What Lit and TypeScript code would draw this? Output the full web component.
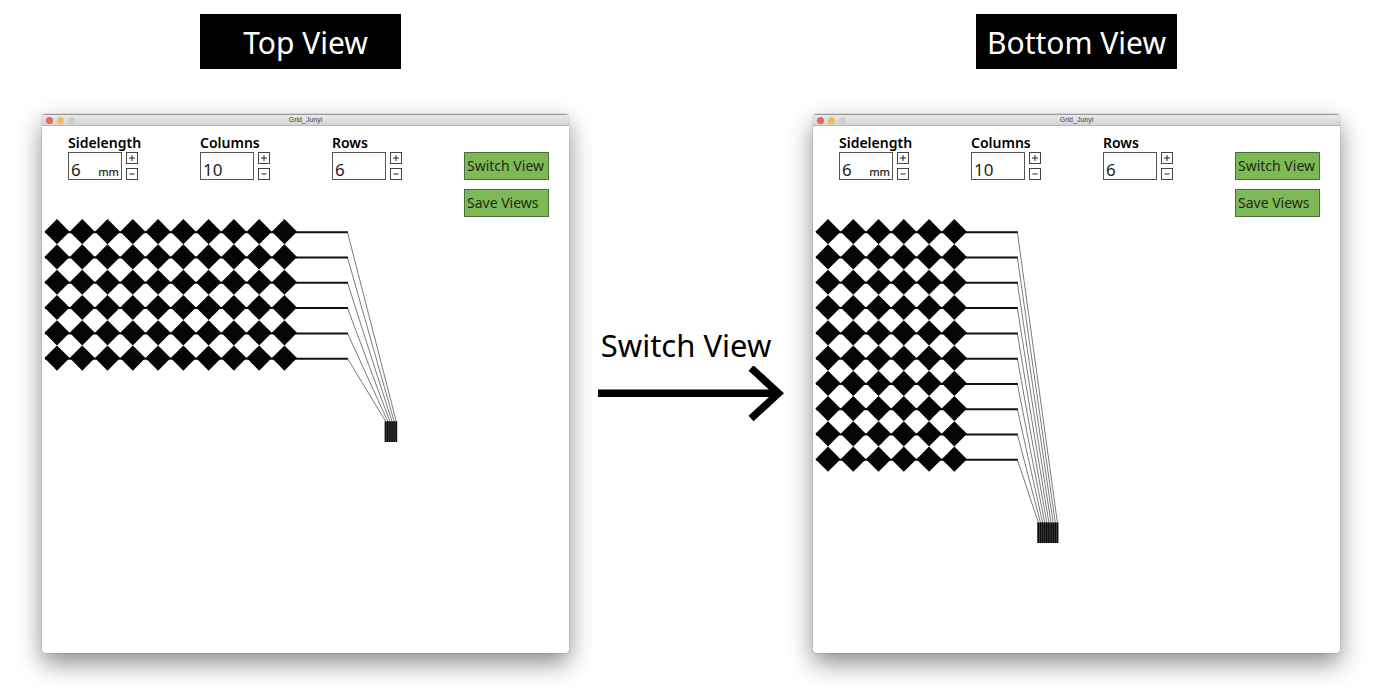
import { LitElement, html, css, svg } from "lit";
import { customElement, property, state } from "lit/decorators.js";

type Side = "top" | "bottom";

const PITCH = 25.27;
const HALF = 12.6;
const ORIGIN = 15;
const TAIL = 63;
const PIN = 2.12;

/** Electrode matrix: diamonds joined in lines, each routed to a connector pin. */
@customElement("grid-plot")
class GridPlot extends LitElement {
  @property({ type: Number }) across = 10;
  @property({ type: Number }) lines = 6;

  static styles = css`
    :host { display: block; }
    svg { display: block; width: 100%; height: auto; }
    .cell { fill: #050505; }
    .trace { stroke: #111; stroke-width: 2; }
    .lead { stroke: #222; stroke-width: 0.6; }
    .pin { stroke: #0a0a0a; stroke-width: 1.5; }
    .pad { fill: #5a5a5a; }
  `;

  render() {
    const endX = ORIGIN + PITCH * (this.across - 1) + TAIL;
    const lastY = ORIGIN + PITCH * (this.lines - 1);
    const padTop = lastY + TAIL;
    const padCenter = endX + 37 + (this.across - this.lines) * 1.625;
    const padLeft = padCenter - (this.lines * PIN) / 2;
    const rows = Array.from({ length: this.lines }, (_, i) => i);
    const cells = Array.from({ length: this.across }, (_, i) => i);
    return html`<svg viewBox="0 0 527 436" role="img" aria-label="Electrode grid">
      ${rows.map((r) => {
        const y = ORIGIN + PITCH * r;
        const pin = padLeft + PIN * (this.lines - 1 - r) + PIN / 2;
        return svg`
          <line class="trace" x1="3" y1=${y + 0.3} x2=${endX + 0.5} y2=${y + 0.3}></line>
          <line class="lead" x1=${endX} y1=${y} x2=${pin} y2=${padTop}></line>
          ${cells.map((c) => {
            const x = ORIGIN + PITCH * c;
            return svg`<path class="cell" d=${`M${x - HALF} ${y - 0.3}L${x} ${y - 0.3 - HALF}L${x + HALF} ${y - 0.3}L${x} ${y - 0.3 + HALF}Z`}></path>`;
          })}`;
      })}
      <rect class="pad" x=${padLeft} y=${padTop} width=${PIN * this.lines} height="20.6"></rect>
      ${rows.map((r) => {
        const x = padLeft + PIN * r + PIN / 2;
        return svg`<line class="pin" x1=${x} y1=${padTop} x2=${x} y2=${padTop + 20.6}></line>`;
      })}
    </svg>`;
  }
}

/** Labelled value box with plus and minus steppers. */
@customElement("step-field")
class StepField extends LitElement {
  @property() label = "";
  @property() unit = "";
  @property({ type: Number }) value = 1;

  static styles = css`
    :host { display: block; width: 70px; color: #111; }
    label { display: block; font-size: 14px; line-height: 18px; font-weight: 600; color: #000; white-space: nowrap; }
    .row { display: flex; justify-content: space-between; height: 28px; }
    .box { display: flex; align-items: flex-end; box-sizing: border-box; width: 54px; border: 1px solid #555; padding: 0 2px; background: #fff; }
    input { flex: 1; min-width: 0; width: 100%; height: 18px; border: 0; padding: 0; background: none; font: inherit; font-size: 17px; line-height: 18px; color: #222; outline: none; }
    .unit { font-size: 11px; line-height: 14px; font-weight: 500; color: #222; }
    .steps { display: flex; flex-direction: column; justify-content: space-between; }
    button { display: grid; place-items: center; box-sizing: border-box; width: 12px; height: 12px; padding: 0; border: 1px solid #444; background: #fff; }
    svg { display: block; width: 6px; height: 6px; stroke: #222; stroke-width: 1; }
  `;

  private set(v: number) {
    const value = Math.max(1, Math.min(14, v || 1));
    this.dispatchEvent(new CustomEvent("step", { detail: value }));
  }

  render() {
    return html`
      <label for="v">${this.label}</label>
      <div class="row">
        <div class="box">
          <input id="v" inputmode="numeric" .value=${String(this.value)}
            @change=${(e: Event) => this.set(Number((e.target as HTMLInputElement).value))} />
          ${this.unit ? html`<span class="unit">${this.unit}</span>` : ""}
        </div>
        <div class="steps">
          <button aria-label="Increase" @click=${() => this.set(this.value + 1)}>
            <svg viewBox="0 0 6 6"><path d="M0 3H6M3 0V6"></path></svg>
          </button>
          <button aria-label="Decrease" @click=${() => this.set(this.value - 1)}>
            <svg viewBox="0 0 6 6"><path d="M0.500 3H5.500"></path></svg>
          </button>
        </div>
      </div>`;
  }
}

@customElement("grid-window")
class GridWindow extends LitElement {
  @property() side: Side = "top";
  @state() private length = 6;
  @state() private columns = 10;
  @state() private rows = 6;

  static styles = css`
    :host { display: block; }
    .window {
      background: #fff;
      border-radius: 4px 4px 3px 3px;
      box-shadow: 0 0 1px rgba(0, 0, 0, 0.7), 0 10px 24px rgba(0, 0, 0, 0.46);
      overflow: hidden;
    }
    header {
      display: grid; grid-template-columns: 1fr auto 1fr; align-items: center;
      height: 12px; box-sizing: border-box; padding: 0 4px;
      border-top: 1px solid #999; border-bottom: 1px solid #b5b5b5;
      background: linear-gradient(#e9e9e9, #d4d4d4);
    }
    .lights { display: flex; gap: 4px; }
    .light { width: 7px; height: 7px; border-radius: 50%; }
    .close { background: #e0695f; }
    .min { background: #f0bd57; }
    .max { background: #cdcdcd; }
    .title { font: 7px/10px "Liberation Sans", Arial, sans-serif; color: #444; }
    .tools { display: flex; justify-content: space-between; align-items: flex-start; padding: 8px 20px 0 26px; }
    .actions { display: flex; flex-direction: column; gap: 9px; width: 85px; padding-top: 18px; }
    .action {
      height: 28px; padding: 0 2px; border: 1px solid #4d6b3c; background: #7dba56;
      font: inherit; font-size: 14px; line-height: 26px; color: #1d2a1a; text-align: left; white-space: nowrap;
    }
  `;

  private flip() {
    this.side = this.side === "top" ? "bottom" : "top";
  }

  private save() {
    this.dispatchEvent(new CustomEvent("save-views", { bubbles: true, composed: true }));
  }

  render() {
    const top = this.side === "top";
    return html`<section class="window">
      <header>
        <div class="lights">
          <span class="light close"></span><span class="light min"></span><span class="light max"></span>
        </div>
        <span class="title">Grid_Junyi</span>
      </header>
      <div class="tools">
        <step-field label="Sidelength" unit="mm" .value=${this.length} @step=${(e: CustomEvent) => (this.length = e.detail)}></step-field>
        <step-field label="Columns" .value=${this.columns} @step=${(e: CustomEvent) => (this.columns = e.detail)}></step-field>
        <step-field label="Rows" .value=${this.rows} @step=${(e: CustomEvent) => (this.rows = e.detail)}></step-field>
        <div class="actions">
          <button class="action" @click=${this.flip}>Switch View</button>
          <button class="action" @click=${this.save}>Save Views</button>
        </div>
      </div>
      <grid-plot .across=${top ? this.columns : this.rows} .lines=${top ? this.rows : this.columns}></grid-plot>
    </section>`;
  }
}

@customElement("app-root")
class AppRoot extends LitElement {
  static styles = css`
    :host { display: block; min-height: 100vh; background: #fff; font-family: "Noto Sans", "Open Sans", sans-serif; color: #000; }
    .figure {
      display: grid; grid-template-columns: 1fr 244px 1fr; row-gap: 45px;
      padding: 14px 40px 45px 42px;
    }
    .caption {
      box-sizing: border-box; width: 201px; height: 55px; margin: 0; justify-self: center;
      background: #000; color: #fff; font-size: 30px; line-height: 57px; font-weight: 400; text-align: center; white-space: nowrap;
    }
    .first { grid-column: 1; margin-right: 10px; padding-left: 10px; }
    .second { grid-column: 3; }
    .step { align-self: center; justify-self: center; width: 186px; padding-bottom: 22px; font-size: 31px; line-height: 42px; }
    .step p { margin: 0; padding-right: 10px; text-align: center; white-space: nowrap; }
    .step svg { display: block; width: 186px; height: 56px; fill: none; stroke: #000; stroke-width: 7.4; }
  `;

  render() {
    return html`<main class="figure">
      <h2 class="caption first">Top View</h2>
      <h2 class="caption second">Bottom View</h2>
      <grid-window side="top"></grid-window>
      <div class="step">
        <p>Switch View</p>
        <svg viewBox="0 0 186 56" aria-hidden="true"><path d="M0 27.3H180M153 2L180.500 27.300L153 52.500"></path></svg>
      </div>
      <grid-window side="bottom"></grid-window>
    </main>`;
  }
}
